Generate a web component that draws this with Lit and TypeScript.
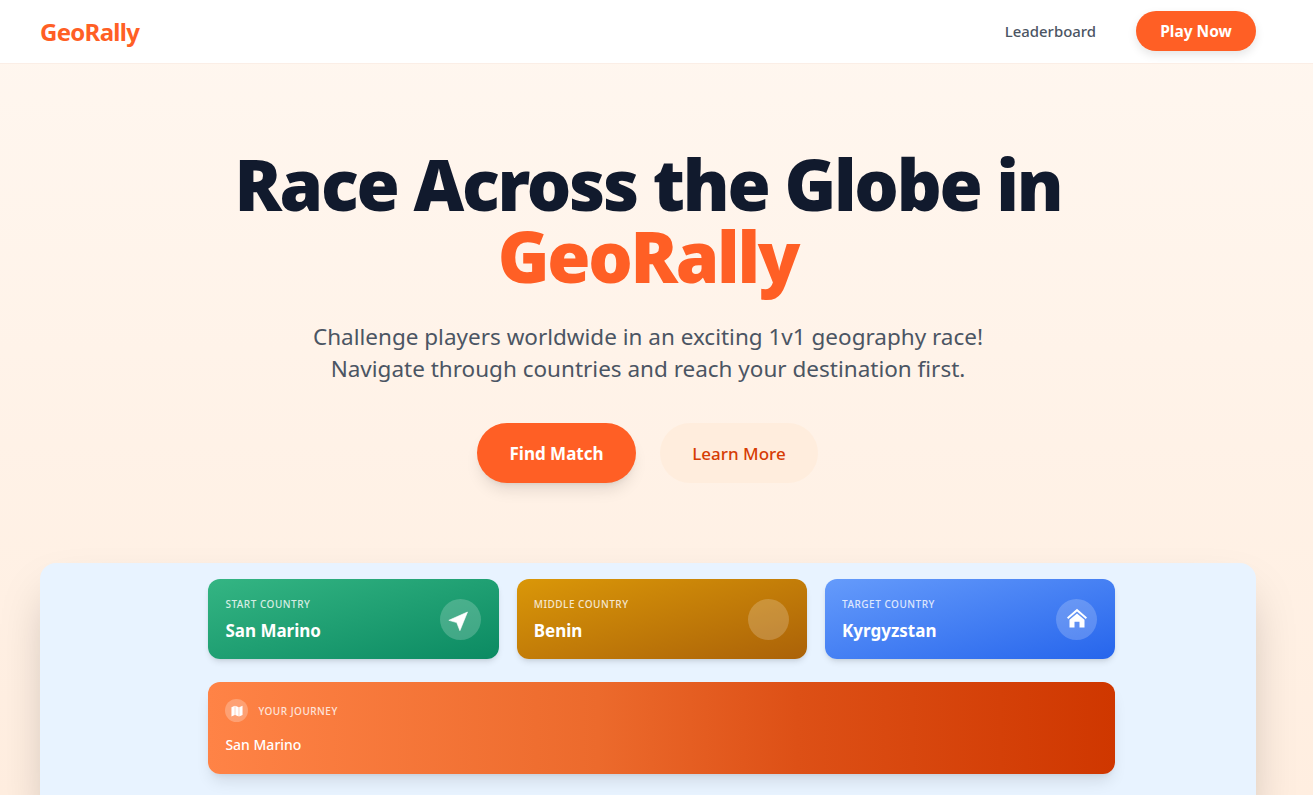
import { LitElement, html, css, svg } from 'lit';
import { customElement } from 'lit/decorators.js';

const planeIcon = svg`<path d="M19.5 5 .8 13.3l7.9 2.3 3.2 8.1Z" stroke="#fff" stroke-width=".6" stroke-linejoin="round"/>`;
const homeIcon = svg`<path d="M12 1.8 2 10.6 3.2 12 12 4.4l8.8 7.6 1.2-1.4L12 1.8Z"/><path d="M12 6.4 4.5 12.8v7.7h5v-5.7h5v5.7h5v-7.7L12 6.4Z"/>`;
const mapIcon = svg`<path d="M2.5 5.5 8.2 3v16l-5.7 2.4V5.5Zm6.5-2.5 6 2.5v16L9 19V3Zm6.8 2.5L21.5 3v16l-5.7 2.4V5.5Z"/>`;

@customElement('app-root')
export class AppRoot extends LitElement {
  static styles = css`
    :host {
      display: block;
      height: 795px;
      overflow: hidden;
      font-family: 'Noto Sans', 'Open Sans', sans-serif;
      background: linear-gradient(180deg, #fff7f0 0%, #ffeee0 100%);
    }

    /* nav */
    .nav {
      display: flex;
      align-items: center;
      justify-content: space-between;
      height: 63px;
      padding: 0 57px 0 40px;
      background: #fff;
      border-bottom: 1px solid #fbeee6;
    }
    .logo {
      font-size: 24px;
      font-weight: 700;
      letter-spacing: -0.7px;
      color: #ff5f25;
    }
    .nav-right {
      display: flex;
      align-items: center;
      gap: 40px;
      padding-bottom: 2px;
    }
    .nav-link {
      font-size: 14.9px;
      font-weight: 500;
      color: #4b5563;
    }
    .play {
      display: flex;
      align-items: center;
      justify-content: center;
      width: 120px;
      height: 40px;
      border-radius: 20px;
      background: #ff5f25;
      color: #fff;
      font-size: 15.5px;
      font-weight: 700;
      box-shadow: 0 4px 10px rgba(0, 0, 0, 0.1);
    }

    /* hero */
    .hero {
      display: flex;
      flex-direction: column;
      align-items: center;
      padding: 84px 17px 0 0;
    }
    h1 {
      margin: 0;
      font-size: 70px;
      line-height: 72px;
      font-weight: 900;
      letter-spacing: -2.25px;
      text-align: center;
      color: #111a2d;
    }
    h1 span {
      display: block;
      color: #ff5f25;
    }
    .sub {
      margin: 29px 0 0;
      font-size: 22.5px;
      line-height: 32px;
      text-align: center;
      color: #4b5563;
    }
    .actions {
      display: flex;
      gap: 24px;
      margin: 38px 1px 0 0;
    }
    .btn {
      display: flex;
      align-items: center;
      justify-content: center;
      width: 159px;
      height: 60px;
      border-radius: 30px;
      font-size: 17px;
    }
    .btn.primary {
      background: #ff5f25;
      color: #fff;
      font-weight: 700;
      box-shadow: 0 10px 15px -3px rgba(0, 0, 0, 0.1), 0 4px 6px -4px rgba(0, 0, 0, 0.1);
    }
    .btn.secondary {
      width: 158px;
      background: #ffeddd;
      color: #d63c04;
      font-weight: 500;
    }

    /* panel */
    .panel {
      display: flex;
      flex-direction: column;
      gap: 23px;
      margin: 80px 57px 0 40px;
      padding: 16px 140.6px 40px 168.4px;
      border-radius: 16px;
      background: #e8f3ff;
      box-shadow: 0 25px 50px -12px rgba(0, 0, 0, 0.25);
    }
    .cards {
      display: grid;
      grid-template-columns: repeat(3, 1fr);
      gap: 18px;
    }
    .card {
      display: flex;
      align-items: center;
      justify-content: space-between;
      height: 80px;
      box-sizing: border-box;
      padding: 0 18px 0 17px;
      border-radius: 12px;
      color: #fff;
      box-shadow: 0 4px 6px -1px rgba(0, 0, 0, 0.1), 0 2px 4px -2px rgba(0, 0, 0, 0.1);
    }
    .card.green { background: linear-gradient(to bottom right, #34b583, #0b8a62); }
    .card.amber { background: linear-gradient(to bottom right, #da9708, #ab6208); }
    .card.blue { background: linear-gradient(to bottom right, #659bfb, #2665ec); }
    .card-text {
      padding-top: 1px;
    }
    .label {
      font-size: 10px;
      line-height: 14px;
      font-weight: 500;
      letter-spacing: 0.5px;
      opacity: 0.8;
      text-transform: uppercase;
    }
    .name {
      margin-top: 8px;
      font-size: 17px;
      line-height: 24px;
      font-weight: 700;
    }
    .badge {
      display: flex;
      align-items: center;
      justify-content: center;
      width: 41px;
      height: 41px;
      border-radius: 50%;
      background: rgba(255, 255, 255, 0.2);
    }
    .badge svg {
      width: 24px;
      height: 24px;
      fill: #fff;
    }
    .journey {
      height: 92px;
      box-sizing: border-box;
      padding: 17px 17px 0;
      border-radius: 12px;
      color: #fff;
      background: linear-gradient(90deg, #ff8346, #ec6a2c 43%, #dd5016 65%, #cf3700);
      box-shadow: 0 10px 15px -3px rgba(0, 0, 0, 0.1), 0 4px 6px -4px rgba(0, 0, 0, 0.1);
    }
    .journey-head {
      display: flex;
      align-items: center;
      gap: 10px;
    }
    .journey-icon {
      display: flex;
      align-items: center;
      justify-content: center;
      width: 23px;
      height: 23px;
      border-radius: 50%;
      background: rgba(255, 255, 255, 0.25);
    }
    .journey-icon svg {
      width: 14px;
      height: 14px;
      fill: #fff;
    }
    .stop {
      margin-top: 13px;
      font-size: 14px;
      line-height: 20px;
      font-weight: 500;
    }
  `;

  render() {
    return html`
      <nav class="nav">
        <div class="logo">GeoRally</div>
        <div class="nav-right">
          <span class="nav-link">Leaderboard</span>
          <span class="play">Play Now</span>
        </div>
      </nav>

      <section class="hero">
        <h1>Race Across the Globe in <span>GeoRally</span></h1>
        <p class="sub">
          Challenge players worldwide in an exciting 1v1 geography race!<br />
          Navigate through countries and reach your destination first.
        </p>
        <div class="actions">
          <span class="btn primary">Find Match</span>
          <span class="btn secondary">Learn More</span>
        </div>
      </section>

      <section class="panel">
        <div class="cards">
          ${this.renderCard('green', 'Start Country', 'San Marino', planeIcon)}
          ${this.renderCard('amber', 'Middle Country', 'Benin')}
          ${this.renderCard('blue', 'Target Country', 'Kyrgyzstan', homeIcon)}
        </div>
        <div class="journey">
          <div class="journey-head">
            <span class="journey-icon"><svg viewBox="0 0 24 24">${mapIcon}</svg></span>
            <span class="label">Your Journey</span>
          </div>
          <div class="stop">San Marino</div>
        </div>
      </section>
    `;
  }

  private renderCard(tone: string, label: string, name: string, icon?: unknown) {
    return html`
      <div class="card ${tone}">
        <div class="card-text">
          <div class="label">${label}</div>
          <div class="name">${name}</div>
        </div>
        <span class="badge">${icon ? html`<svg viewBox="0 0 24 24">${icon}</svg>` : ''}</span>
      </div>
    `;
  }
}
